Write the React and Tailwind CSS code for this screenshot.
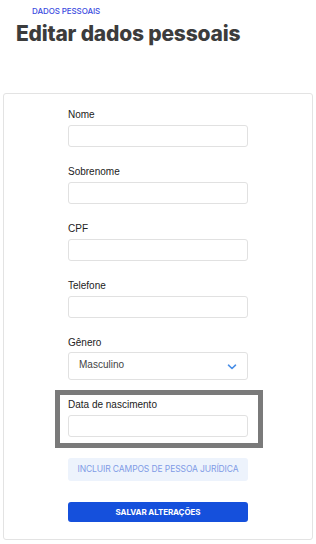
import React from 'react';

const fields = ['Nome', 'Sobrenome', 'CPF', 'Telefone'];

const Label = ({ children }) => (
  <div className="text-[10px] leading-[12px] text-[#222] font-['Liberation_Sans',Arial,sans-serif]">{children}</div>
);

const Input = () => (
  <div className="mt-[4px] h-[22px] w-full rounded-[3px] border border-[#e1e1e1] bg-white" />
);

const App = () => {
  return (
    <div className="w-[316px] h-[544px] bg-white overflow-hidden font-['Inter',sans-serif]">
      <div className="pl-[32px] pt-[6px] text-[8px] leading-[10px] text-[#3b4be0] font-medium tracking-[-0.1px]">
        DADOS PESSOAIS
      </div>
      <h1 className="pl-[16px] mt-[5px] text-[21px] leading-[26px] font-extrabold text-[#3c3c3c] tracking-[-0.2px]">
        Editar dados pessoais
      </h1>

      <div className="mx-[3px] mt-[46px] h-[447px] rounded-[3px] border border-[#e3e3e3] pt-[15px]">
        <div className="mx-auto w-[180px]">
          {fields.map((f) => (
            <div key={f} className="mb-[19px]">
              <Label>{f}</Label>
              <Input />
            </div>
          ))}

          <div className="mt-[2px]">
            <Label>Gênero</Label>
            <div className="mt-[3px] h-[28px] w-full rounded-[3px] border border-[#e1e1e1] flex items-center justify-between pl-[10px] pr-[10px]">
              <span className="text-[10px] text-[#444] font-['Liberation_Sans',Arial,sans-serif] -mt-[4px]">Masculino</span>
              <svg width="10" height="6" viewBox="0 0 10 6" className="mt-[2px]">
                <path d="M1.5 1.2 L5 4.5 L8.5 1.2" fill="none" stroke="#4a8fe7" strokeWidth="1.6" strokeLinecap="round" strokeLinejoin="round" />
              </svg>
            </div>
          </div>

          <div className="mt-[10px] ml-[-13px] w-[208px] border-[5px] border-[#7a7a7a] pl-[8px] pt-[4px] pb-[6px]">
            <div className="w-[180px]">
              <Label>Data de nascimento</Label>
              <Input />
            </div>
          </div>

          <div className="mt-[10px] h-[23px] w-full rounded-[3px] bg-[#edf3fc] flex items-center justify-center text-[8.5px] text-[#7f9be6] tracking-[-0.1px]">
            INCLUIR CAMPOS DE PESSOA JURÍDICA
          </div>

          <div className="mt-[21px] h-[20px] w-full rounded-[3px] bg-[#1550dc] flex items-center justify-center text-[8px] font-bold text-white tracking-[-0.1px]">
            SALVAR ALTERAÇÕES
          </div>
        </div>
      </div>
    </div>
  );
};

export default App;
